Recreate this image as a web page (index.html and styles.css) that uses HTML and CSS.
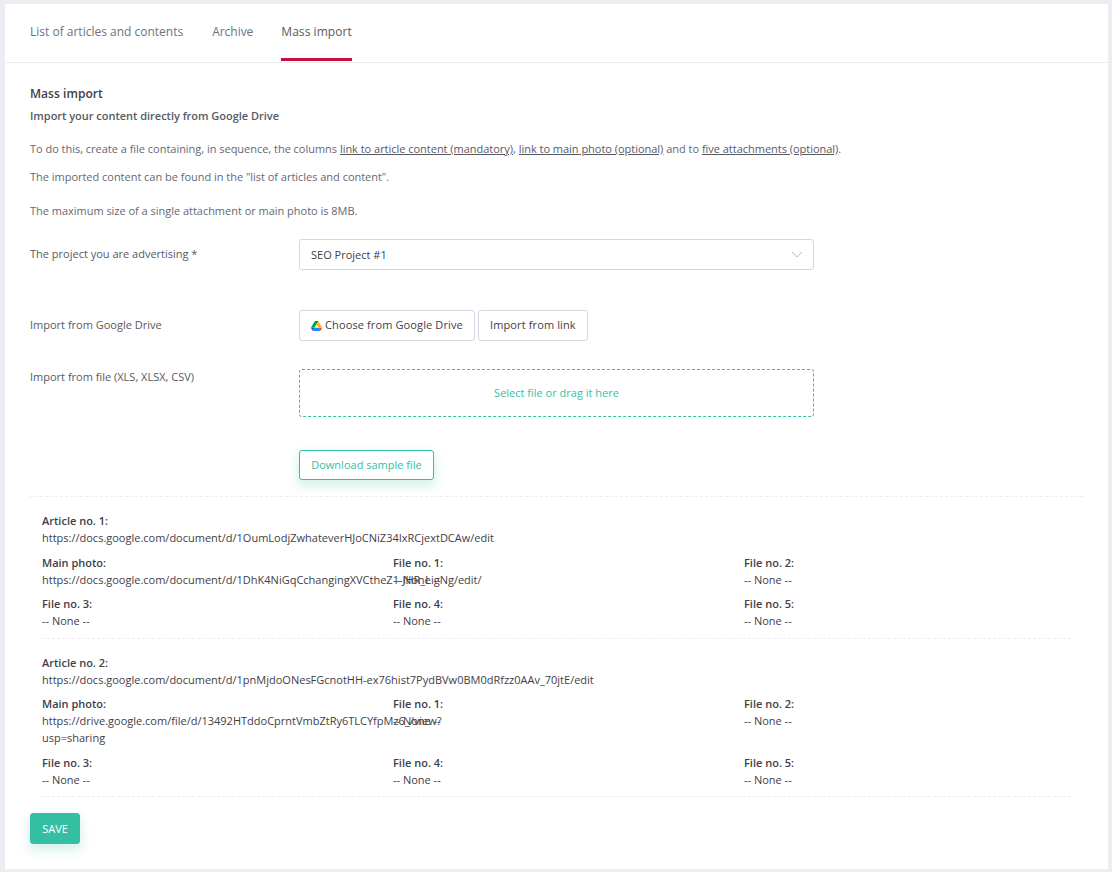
FILE: index.html
```html
<!DOCTYPE html>
<html lang="en">
<head>
<meta charset="utf-8">
<title>Mass import</title>
<link rel="stylesheet" href="styles.css">
</head>
<body>
<main class="card">
  <nav class="tabs">
    <a class="tab">List of articles and contents</a>
    <a class="tab">Archive</a>
    <a class="tab active">Mass import</a>
  </nav>
  <section class="content">
    <h1 class="title">Mass import</h1>
    <h2 class="subtitle">Import your content directly from Google Drive</h2>
    <p class="intro first">To do this, create a file containing, in sequence, the columns <u>link to article content (mandatory)</u>, <u>link to main photo (optional)</u> and to <u>five attachments (optional)</u>.</p>
    <p class="intro second">The imported content can be found in the "list of articles and content".</p>
    <p class="intro third">The maximum size of a single attachment or main photo is 8MB.</p>

    <div class="form-row project-row">
      <label class="label">The project you are advertising *</label>
      <div class="select">
        <span>SEO Project #1</span>
        <svg class="chev" width="12" height="7" viewBox="0 0 12 7"><path d="M1 1l5 5 5-5" fill="none" stroke="#b9bcc9" stroke-width="1"/></svg>
      </div>
    </div>

    <div class="form-row drive-row">
      <label class="label">Import from Google Drive</label>
      <div class="buttons">
        <button class="btn">
          <svg class="drive" width="11" height="10" viewBox="0 0 87.3 78"><path d="M6.6 66.85l3.85 6.65c.8 1.4 1.95 2.5 3.3 3.3L27.5 53H0c0 1.55.4 3.1 1.2 4.5z" fill="#0066da"/><path d="M43.65 25L29.9 1.2c-1.35.8-2.5 1.9-3.3 3.3L1.2 48.5C.4 49.9 0 51.45 0 53h27.5z" fill="#00ac47"/><path d="M73.55 76.8c1.35-.8 2.5-1.9 3.3-3.3l1.6-2.75 7.65-13.25c.8-1.4 1.2-2.95 1.2-4.5H59.8l5.85 11.5z" fill="#ea4335"/><path d="M43.65 25L57.4 1.2C56.05.4 54.5 0 52.9 0H34.4c-1.6 0-3.15.45-4.5 1.2z" fill="#00832d"/><path d="M59.8 53H27.5L13.75 76.8c1.35.8 2.9 1.2 4.5 1.2h50.8c1.6 0 3.15-.45 4.5-1.2z" fill="#2684fc"/><path d="M73.4 26.5l-12.7-22c-.8-1.4-1.95-2.5-3.3-3.3L43.65 25 59.8 53h27.45c0-1.55-.4-3.1-1.2-4.5z" fill="#ffba00"/></svg>
          <span>Choose from Google Drive</span>
        </button>
        <button class="btn"><span>Import from link</span></button>
      </div>
    </div>

    <div class="form-row file-row">
      <label class="label">Import from file (XLS, XLSX, CSV)</label>
      <div class="dropzone"><span>Select file or drag it here</span></div>
    </div>

    <div class="form-row sample-row">
      <span class="label"></span>
      <button class="btn-outline"><span>Download sample file</span></button>
    </div>

    <div class="articles">
      <article class="article">
        <div class="field"><b>Article no. 1:</b><span>https://docs.google.com/document/d/1OumLodjZwhateverHJoCNiZ34IxRCjextDCAw/edit</span></div>
        <div class="grid">
          <div class="field"><b>Main photo:</b><span class="nowrap">https://docs.google.com/document/d/1DhK4NiGqCchangingXVCtheZ1-JHR_LigNg/edit/</span></div>
          <div class="field"><b>File no. 1:</b><span>-- None --</span></div>
          <div class="field"><b>File no. 2:</b><span>-- None --</span></div>
          <div class="field"><b>File no. 3:</b><span>-- None --</span></div>
          <div class="field"><b>File no. 4:</b><span>-- None --</span></div>
          <div class="field"><b>File no. 5:</b><span>-- None --</span></div>
        </div>
      </article>
      <article class="article">
        <div class="field"><b>Article no. 2:</b><span>https://docs.google.com/document/d/1pnMjdoONesFGcnotHH-ex76hist7PydBVw0BM0dRfzz0AAv_70jtE/edit</span></div>
        <div class="grid">
          <div class="field"><b>Main photo:</b><span class="nowrap">https://drive.google.com/file/d/13492HTddoCprntVmbZtRy6TLCYfpMz6_/view?<br>usp=sharing</span></div>
          <div class="field"><b>File no. 1:</b><span>-- None --</span></div>
          <div class="field"><b>File no. 2:</b><span>-- None --</span></div>
          <div class="field"><b>File no. 3:</b><span>-- None --</span></div>
          <div class="field"><b>File no. 4:</b><span>-- None --</span></div>
          <div class="field"><b>File no. 5:</b><span>-- None --</span></div>
        </div>
      </article>
    </div>
    <button class="btn-save"><span>SAVE</span></button>
  </section>
</main>
</body>
</html>
```
FILE: styles.css
```css
* { box-sizing: border-box; }
html, body { margin: 0; padding: 0; }
body {
  background: #ebedf3;
  font-family: "Open Sans", sans-serif;
  font-size: 11px;
  color: #575962;
  height: 872px;
  overflow: hidden;
  padding: 4px 4px 3px 5px;
}
.card { background: #fff; height: 865px; }
.tabs {
  display: flex;
  gap: 29px;
  height: 59px;
  padding: 0 25px;
  border-bottom: 1px solid #ebedf2;
}
.tab {
  height: 57px;
  line-height: 55px;
  font-size: 12px;
  color: #6f727d;
}
.tab + .tab { letter-spacing: -0.04px; }
.tab.active {
  color: #575962;
  border-bottom: 3px solid #c4103d;
  letter-spacing: 0.05px;
  margin-left: -1px;
}
.content { padding: 0 25px; }
.title { margin: 23px 0 0; font-size: 12px; line-height: 16px; font-weight: 600; color: #3f4047; letter-spacing: 0.04px; }
.subtitle { margin: 6px 0 0; font-size: 11px; line-height: 16px; font-weight: 600; color: #575962; letter-spacing: -0.02px; }
.intro { margin: 0; font-size: 11px; line-height: 16px; color: #666872; letter-spacing: -0.022px; }
.intro u { color: #575962; }
.first { margin-top: 17px; }
.second { margin-top: 12px; }
.third { margin-top: 18px; }
.form-row { display: flex; align-items: flex-start; }
.label { width: 269px; flex: none; font-size: 11px; line-height: 16px; color: #575962; }
.project-row { margin-top: 20px; }
.project-row .label { padding-top: 7px; }
.select {
  width: 515px; height: 31px;
  border: 1px solid #d5d6e2; border-radius: 3px;
  display: flex; align-items: center; justify-content: space-between;
  padding: 0 10px 0 11px;
  color: #3f4047;
}
.drive-row { margin-top: 40px; }
.drive-row .label { padding-top: 7px; }
.buttons { display: flex; gap: 3px; }
.btn {
  height: 31px; padding: 0 11px 0 11px;
  font: inherit; color: #3f4047;
  letter-spacing: 0.12px;
  background: #fff; border: 1px solid #d5d6e2; border-radius: 3px;
  display: flex; align-items: center; gap: 3px;
}
.btn span, .dropzone span, .btn-outline span { display: block; position: relative; top: -1px; }
.btn:last-child { width: 110px; justify-content: center; padding: 0; }
.drive { display: block; }
.file-row { margin-top: 28px; }
.dropzone {
  width: 515px; height: 48px;
  border: 1px dashed #34bfa3; border-radius: 3px;
  display: flex; align-items: center; justify-content: center;
  color: #34bfa3;
}
.sample-row { margin-top: 33px; }
.btn-outline {
  height: 30px; width: 135px; padding: 0;
  font: inherit; color: #34bfa3;
  background: #fff; border: 1px solid #34bfa3; border-radius: 3px;
  box-shadow: 0 5px 10px 2px rgba(52,191,163,.19);
}
.articles { margin-top: 16px; border-top: 1px dashed #ebedf2; padding: 0 12px; width: 1053px; }
.article { padding: 15px 0 1px; border-bottom: 1px dashed #ebedf2; }
.article + .article { padding-bottom: 0.5px; }
.field { display: flex; flex-direction: column; min-width: 0; padding-bottom: 7.5px; }
.field b { font-weight: 600; color: #3f4047; line-height: 17px; }
.field span { color: #3f4047; line-height: 17px; }
.grid { display: grid; grid-template-columns: repeat(3, 351px); }
.nowrap { white-space: nowrap; }
.btn-save {
  margin-top: 16px;
  width: 50px; height: 31px; padding: 0;
  font: inherit; color: #fff; background: #34bfa3;
  border: 1px solid #34bfa3; border-radius: 3px;
  box-shadow: 0 5px 10px 2px rgba(52,191,163,.19);
  display: block;
}
```
